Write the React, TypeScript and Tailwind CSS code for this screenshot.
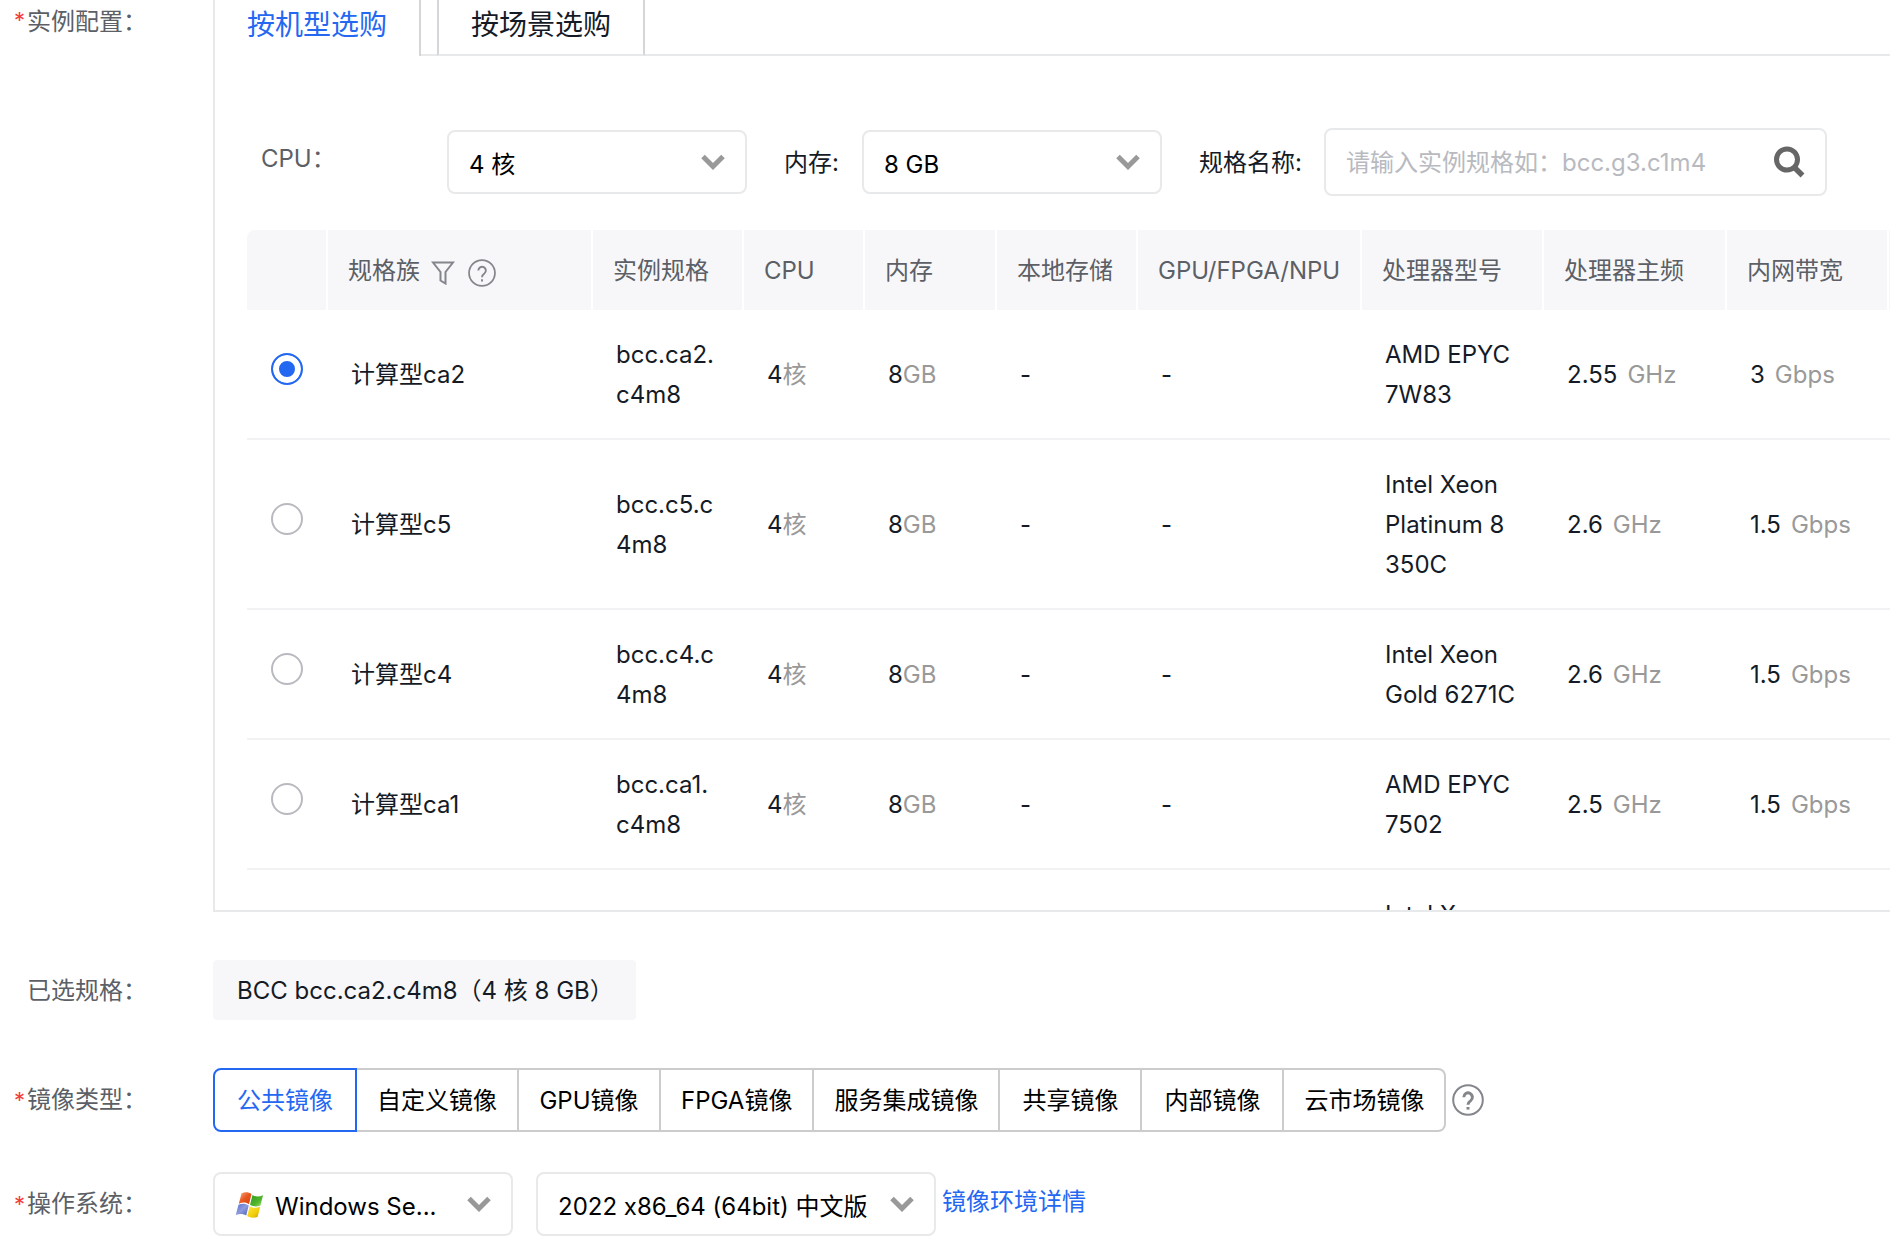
import type { ReactNode } from "react";

const tabs = ["按机型选购", "按场景选购"];

const columns = ["实例规格", "CPU", "内存", "本地存储", "GPU/FPGA/NPU", "处理器型号", "处理器主频", "内网带宽"];

const rows = [
  { family: "计算型ca2", spec: "bcc.ca2.\nc4m8", model: "AMD EPYC\n7W83", freq: "2.55", net: "3" },
  { family: "计算型c5", spec: "bcc.c5.c\n4m8", model: "Intel Xeon\nPlatinum 8\n350C", freq: "2.6", net: "1.5" },
  { family: "计算型c4", spec: "bcc.c4.c\n4m8", model: "Intel Xeon\nGold 6271C", freq: "2.6", net: "1.5" },
  { family: "计算型ca1", spec: "bcc.ca1.\nc4m8", model: "AMD EPYC\n7502", freq: "2.5", net: "1.5" },
];

const imageTypes = ["公共镜像", "自定义镜像", "GPU镜像", "FPGA镜像", "服务集成镜像", "共享镜像", "内部镜像", "云市场镜像"];

function Chevron() {
  return (
    <svg className="pointer-events-none absolute top-6 right-[22px] h-4 w-6" viewBox="0 0 24 16" fill="none" stroke="#999" strokeWidth="5">
      <path d="M2 2.5 12 12.5 22 2.5" />
    </svg>
  );
}

function HelpIcon({ className, markWidth }: { className: string; markWidth: number }) {
  return (
    <svg className={className} viewBox="0 0 32 32" fill="none" stroke="#84868c" strokeWidth="2">
      <circle cx="16" cy="16" r="14.8" />
      <path strokeWidth={markWidth} d="M11.8 13.200a4.300 4.300 0 1 1 6.900 3.400c-1.800 1.300-2.700 2-2.700 4.200" />
      <path strokeWidth={markWidth} d="M16 23v2.600" />
    </svg>
  );
}

function FilterIcon() {
  return (
    <svg className="h-6 w-6" viewBox="0 0 24 24" fill="none" stroke="#84868c" strokeWidth="2">
      <path d="M2 1.500H22L14.500 11V22.500L9.500 19.500V11Z" />
    </svg>
  );
}

function SearchIcon() {
  return (
    <svg className="block h-8 w-8" viewBox="0 0 32 32" fill="none" stroke="#666" strokeWidth="5">
      <circle cx="14" cy="13.500" r="10.500" />
      <path d="M21 21 29.500 29.500" strokeWidth="5.500" />
    </svg>
  );
}

function WindowsLogo() {
  return (
    <svg className="pointer-events-none absolute top-[19px] left-[21px] h-7 w-8" viewBox="0 0 32 28">
      <defs>
        <linearGradient id="red" x1="0" y1="0" x2="1" y2="1">
          <stop offset="0" stopColor="#f6a97c" />
          <stop offset="0.500" stopColor="#e8561f" />
          <stop offset="1" stopColor="#d8430f" />
        </linearGradient>
        <linearGradient id="green" x1="0" y1="0" x2="1" y2="1">
          <stop offset="0" stopColor="#2f9a1a" />
          <stop offset="0.600" stopColor="#4fb52c" />
          <stop offset="1" stopColor="#b5e37c" />
        </linearGradient>
        <linearGradient id="blue" x1="0" y1="0" x2="1" y2="1">
          <stop offset="0" stopColor="#5a6cc4" />
          <stop offset="0.500" stopColor="#8c9be0" />
          <stop offset="1" stopColor="#4a5cae" />
        </linearGradient>
        <linearGradient id="yellow" x1="0" y1="0" x2="1" y2="1">
          <stop offset="0" stopColor="#fbe44a" />
          <stop offset="0.600" stopColor="#f2cf0c" />
          <stop offset="1" stopColor="#c99f08" />
        </linearGradient>
      </defs>
      <path fill="url(#red)" d="M7.500 2.500C10.500.8 14.500.9 17.500 3L15 13.200C12 11.200 8.500 11.100 4.800 12.700Z" />
      <path fill="url(#green)" d="M18.500 4C21.700 6 25 6 29 4.200L26.500 14.400C23.300 16 19.500 15.800 16 13.800Z" />
      <path fill="url(#blue)" d="M4.500 13.800C8 12.400 11.500 12.500 14.700 14.500L12.200 24.500C9 22.500 5.500 22.500 1.800 24.100Z" />
      <path fill="url(#yellow)" d="M15.700 15.200C19 17.200 22.500 17.300 26.200 15.700L23.700 25.700C20.200 27.300 16.500 27.100 13.200 25.100Z" />
    </svg>
  );
}

function Select({ id, label, value, className, selectClass, icon }: { id: string; label: string; value: string; className: string; selectClass: string; icon?: ReactNode }) {
  return (
    <div className={`relative ${className}`}>
      <select
        id={id}
        aria-label={label}
        className={`block h-16 w-full appearance-none rounded-lg border-2 border-[#e8e9eb] bg-white pt-1.5 text-[24px] text-black ${selectClass}`}
      >
        <option>{value}</option>
      </select>
      {icon}
      <Chevron />
    </div>
  );
}

function FieldLabel({ children, required, htmlFor }: { children: ReactNode; required?: boolean; htmlFor?: string }) {
  return (
    <label htmlFor={htmlFor} className="flex w-[199px] shrink-0 text-[#5c5f66]">
      <span className="w-[13px] text-[22px] text-[#f33e3e]">{required ? "*" : ""}</span>
      {children}
    </label>
  );
}

function HeadCell({ children }: { children?: ReactNode }) {
  return <th className="h-20 border-r-2 border-white bg-[#f7f7f9] pt-0.5 pl-5 text-left font-normal whitespace-nowrap text-[#5c5f66]">{children}</th>;
}

function Cell({ children }: { children?: ReactNode }) {
  return <td className="border-b-2 border-[#f2f2f4] pt-[25px] pb-[23px] pl-[23px] whitespace-pre">{children}</td>;
}

function Unit({ children }: { children: ReactNode }) {
  return <span className="text-[#999]">{children}</span>;
}

export default function App() {
  return (
    <div className="overflow-hidden bg-white pl-[14px] font-['Inter','Noto_Sans_CJK_SC',sans-serif] text-[24px] leading-10 text-[#151b26] [font-feature-settings:'calt'_0]">
      <section className="flex items-start">
        <FieldLabel required>
          <span className="pt-0.5">实例配置：</span>
        </FieldLabel>
        <div className="min-w-0 flex-1 border-b-2 border-l-2 border-[#e8e9eb]">
          <div className="flex h-14 text-[28px]" role="tablist">
            <button role="tab" aria-selected="true" className="border-r-2 border-[#d4d6d9] px-8 pb-1.5 text-[#2468f2]">
              {tabs[0]}
            </button>
            <div className="w-4 border-b-2 border-[#e8e9eb]" />
            <button role="tab" aria-selected="false" className="border-x-2 border-b-2 border-x-[#d4d6d9] border-b-[#e8e9eb] px-8 pb-1">
              {tabs[1]}
            </button>
            <div className="flex-1 border-b-2 border-[#e8e9eb]" />
          </div>

          <div className="mt-[72px] flex h-[68px] items-center">
            <label htmlFor="cpu" className="w-[232px] pb-1.5 pl-[46px] text-[#5c5f66]">
              CPU：
            </label>
            <Select id="cpu" label="CPU" value="4 核" className="w-[300px]" selectClass="pl-5" />
            <label htmlFor="memory" className="w-[115px] pt-0.5 pl-[37px]">内存:</label>
            <Select id="memory" label="内存" value="8 GB" className="w-[300px]" selectClass="pl-5" />
            <label htmlFor="spec" className="w-[162px] pt-0.5 pl-[37px]">规格名称:</label>
            <div className="flex h-[68px] w-[503px] items-center rounded-lg border-2 border-[#e8e9eb] pr-5 pl-5">
              <input id="spec" placeholder="请输入实例规格如：bcc.g3.c1m4" className="min-w-0 flex-1 pt-0.5 outline-none placeholder:text-[#b8babf]" />
              <button aria-label="搜索">
                <SearchIcon />
              </button>
            </div>
          </div>

          <div className="mt-[34px] ml-8 h-[680px] overflow-hidden">
            <table className="w-[1804px] table-fixed border-separate border-spacing-0 overflow-hidden rounded-tl-lg">
              <colgroup>
                <col className="w-[81px]" />
                <col className="w-[265px]" />
                <col className="w-[151px]" />
                <col className="w-[121px]" />
                <col className="w-[132px]" />
                <col className="w-[141px]" />
                <col className="w-[224px]" />
                <col className="w-[182px]" />
                <col className="w-[183px]" />
                <col className="w-[162px]" />
                <col className="w-[162px]" />
              </colgroup>
              <thead>
                <tr>
                  <HeadCell />
                  <HeadCell>
                    <span className="flex items-center">
                      规格族
                      <span className="ml-[11px] flex items-center gap-[13px] pt-1">
                        <FilterIcon />
                        <HelpIcon className="h-7 w-7" markWidth={2.2} />
                      </span>
                    </span>
                  </HeadCell>
                  {columns.map((name) => (
                    <HeadCell key={name}>{name}</HeadCell>
                  ))}
                  <HeadCell />
                </tr>
              </thead>
              <tbody>
                {rows.map((row, i) => (
                  <tr key={row.family}>
                    <td className="border-b-2 border-[#f2f2f4] pb-2.5 pl-6 align-middle">
                      <input
                        type="radio"
                        name="family"
                        aria-label={row.family}
                        defaultChecked={i === 0}
                        className="block h-8 w-8 appearance-none rounded-full border-2 border-[#b8babf] bg-white checked:border-[#2468f2] checked:bg-[#2468f2] checked:shadow-[inset_0_0_0_6px_white]"
                      />
                    </td>
                    <Cell>{row.family}</Cell>
                    <Cell>{row.spec}</Cell>
                    <Cell>4<Unit>核</Unit></Cell>
                    <Cell>8<Unit>GB</Unit></Cell>
                    <Cell>-</Cell>
                    <Cell>-</Cell>
                    <Cell>{row.model}</Cell>
                    <Cell>{row.freq}<Unit><span className="ml-2.5">GHz</span></Unit></Cell>
                    <Cell>{row.net}<Unit><span className="ml-2.5">Gbps</span></Unit></Cell>
                    <Cell />
                  </tr>
                ))}
                <tr>
                  <td colSpan={7} />
                  <Cell>Intel Xeon</Cell>
                </tr>
              </tbody>
            </table>
          </div>
        </div>
      </section>

      <section className="mt-12 flex items-center">
        <FieldLabel>
          <span className="pt-0.5">已选规格：</span>
        </FieldLabel>
        <div className="flex h-[60px] items-center rounded bg-[#f7f7f9] pt-0.5 pr-[22px] pl-6">BCC bcc.ca2.c4m8（4 核 8 GB）</div>
      </section>

      <section className="mt-12 flex items-center">
        <FieldLabel required>镜像类型：</FieldLabel>
        <div className="flex">
          {imageTypes.map((name, i) => (
            <button
              key={name}
              className={
                i === 0
                  ? "h-16 w-36 rounded-l-lg border-2 border-[#2468f2] pt-0.5 text-[#2468f2]"
                  : "h-16 min-w-[142px] border-y-2 border-r-2 border-[#ccc] px-5 pt-0.5 text-black last:rounded-r-lg"
              }
            >
              {name}
            </button>
          ))}
        </div>
        <button aria-label="帮助" className="ml-1.5">
          <HelpIcon className="block h-8 w-8" markWidth={3} />
        </button>
      </section>

      <section className="mt-10 flex items-center pb-1">
        <FieldLabel required htmlFor="os">
          操作系统：
        </FieldLabel>
        <Select id="os" label="操作系统" value="Windows Se..." className="mr-[23px] w-[300px]" selectClass="pl-[60px]" icon={<WindowsLogo />} />
        <Select id="version" label="系统版本" value="2022 x86_64 (64bit) 中文版" className="w-[400px]" selectClass="pl-5" />
        <a href="#images" className="ml-1.5 pb-1 text-[#2468f2]">镜像环境详情</a>
      </section>
    </div>
  );
}
